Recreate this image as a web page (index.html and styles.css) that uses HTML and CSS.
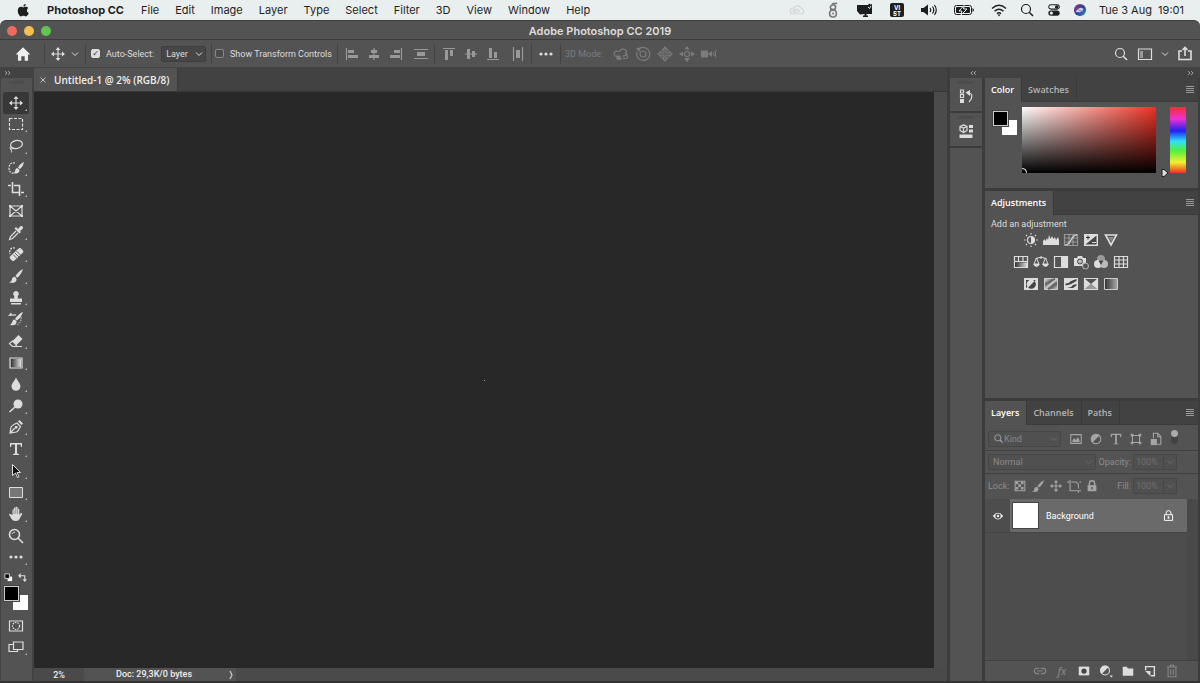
FILE: index.html
```html
<!DOCTYPE html>
<html lang="en">
<head>
<meta charset="utf-8">
<title>Adobe Photoshop CC 2019</title>
<meta name="viewport" content="width=device-width, initial-scale=1">
<link rel="stylesheet" href="styles.css">
</head>
<body>
<svg class="sprite" aria-hidden="true">
  <defs>
    <linearGradient id="fade"><stop offset="0" stop-color="#333"/><stop offset="1" stop-color="#ddd"/></linearGradient>
    <linearGradient id="fade-back"><stop offset="0" stop-color="#333"/><stop offset="1" stop-color="#aaa"/></linearGradient>
    <linearGradient id="diag" x2="1" y2="1"><stop offset="0" stop-color="#ddd"/><stop offset=".35" stop-color="#777"/><stop offset=".5" stop-color="#ccc"/><stop offset=".7" stop-color="#666"/><stop offset="1" stop-color="#ddd"/></linearGradient>
    <linearGradient id="siri" x2="1" y2="1"><stop offset="0" stop-color="#b03a8c"/><stop offset=".5" stop-color="#2c3c90"/><stop offset="1" stop-color="#28a0d0"/></linearGradient>
    <symbol id="move" viewBox="0 0 16 16"><path d="M8 2.500v11M2.500 8h11" class="line"/><path d="M8 1l2.500 3h-5zM8 15l2.500-3h-5zM1 8l3-2.500v5zM15 8l-3-2.500v5z" class="fill"/></symbol>
    <symbol id="chev" viewBox="0 0 8 8"><path d="M1 2.500l3 3 3-3" class="line thin"/></symbol>
    <symbol id="search" viewBox="0 0 16 16"><circle cx="7" cy="7" r="4.500" class="line"/><path d="M10.200 10.200L14 14" class="line heavy"/></symbol>
    <symbol id="brush" viewBox="0 0 16 16"><path d="M15 1c-3 1.500-5.500 4-7.500 7l1.800 1.700C12 7.500 14 4.500 15 1zM6.800 8.800c-2 0-2.800 1.500-3 3C3.500 13.500 2.500 14 1 14.300c3 1.200 7 .5 7.500-2 .2-1-.2-2-.7-2.500z" class="fill"/></symbol>
    <symbol id="menu" viewBox="0 0 10 8"><path d="M1 .5h8M1 2.500h8M1 4.500h8M1 6.500h8" class="line thin"/></symbol>
    <symbol id="dots" viewBox="0 0 16 16"><circle cx="3" cy="8" r="1.600" class="fill"/><circle cx="8" cy="8" r="1.600" class="fill"/><circle cx="13" cy="8" r="1.600" class="fill"/></symbol>
    <symbol id="half" viewBox="0 0 16 16"><circle cx="8" cy="8" r="5.500" class="line"/><path d="M12 4a5.600 5.600 0 0 0-8 8z" class="fill"/></symbol>
    <symbol id="left2" viewBox="0 0 8 6"><path d="M3.500 .8L1 3l2.500 2.200M7 .8L4.500 3 7 5.200" class="line thin"/></symbol>
    <symbol id="right2" viewBox="0 0 8 6"><path d="M1 .8L3.500 3 1 5.200M4.500 .8L7 3 4.500 5.200" class="line thin"/></symbol>
  </defs>
</svg>

<header class="menubar">
  <nav class="menus" aria-label="Application menu">
    <button class="apple" aria-label="Apple"><svg viewBox="0 0 16 16"><path class="fill" d="M11.200 1c.1 1.500-1.200 3-2.800 3C8.200 2.500 9.600 1.100 11.200 1zM8.300 5c.7 0 1.500-.8 2.900-.8 1.100 0 2.200.6 2.900 1.500-2.400 1.500-2 4.800.5 5.700-.6 1.700-1.900 3.900-3.400 3.900-1 0-1.500-.6-2.700-.6s-1.800.6-2.700.6C4 15.300 2 11.800 2 8.800c0-2.900 1.700-4.500 3.700-4.500 1.200 0 2 .7 2.600.7z"/></svg></button>
    <button class="app">Photoshop CC</button>
    <button>File</button><button>Edit</button><button>Image</button><button>Layer</button><button>Type</button><button>Select</button><button>Filter</button><button>3D</button><button>View</button><button>Window</button><button>Help</button>
  </nav>
  <div class="status-icons">
    <svg class="cloud" viewBox="0 0 16 16"><path class="line" d="M4 12a3 3 0 1 1 .5-6 4.500 4.500 0 0 1 8 .5A2.800 2.800 0 0 1 12 12H9L5.500 8.500M7 12a2.500 2.500 0 1 1 1.500-4.500L11 10"/></svg>
    <svg class="loops" viewBox="0 0 16 16"><path class="line heavy" d="M7 2c2-1.500 3 .5 5-1M8 3C4.500 3 4.500 7.500 8 7.500S11.500 3 8 3zM8 8c-4.500 0-4.500 7 0 7S12.500 8 8 8zM5 7.500l6 1M8 10.500v2"/></svg>
    <svg viewBox="0 0 16 16"><path class="fill" d="M0 3h11l1-1.500 1.500 1L15 2v10H9.500v1.500H11V15H6v-1.500h1.500V12L3 12.500 0 9z"/><path d="M11 5l1.500 1.500L14 4" stroke="#e9eeee" fill="none"/></svg>
    <svg viewBox="0 0 16 16"><rect class="fill" x="1" y="1" width="14" height="14" rx="2"/><text x="8" y="7.500">VI</text><text x="8" y="13.500">ST</text></svg>
    <svg viewBox="0 0 16 16"><path class="fill" d="M0 6h2.500L7 2.500v11L2.500 10H0z"/><path class="line" d="M9 6q1.500 2 0 4M11.500 4.500q2.500 3.500 0 7M13.500 3q3.500 5 0 10"/></svg>
    <svg class="battery" viewBox="0 0 22 16"><rect class="line thin" x="1.500" y="3.500" width="17" height="9" rx="2"/><rect class="fill" x="3" y="5" width="14" height="6" rx="1"/><path d="M11 3.500L6 9h3l-1 4 6-6h-3.500z" fill="#111" stroke="#e9eeee"/><path class="fill" d="M19.500 6q3 2 0 4z"/></svg>
    <svg viewBox="0 0 16 16"><path d="M1 6.500q7-6.500 14 0M3.500 9.200q4.500-4 9 0M6 11.600q2-1.600 4 0" fill="none" stroke="#222" stroke-width="1.500"/><path class="fill" d="M8 14.500l-1.500-2h3z"/></svg>
    <svg class="glass"><use href="#search"/></svg>
    <svg viewBox="0 0 16 16"><rect class="line" x="2" y="2" width="12" height="5" rx="2.500"/><circle class="fill" cx="11" cy="4.500" r="2"/><rect class="fill" x="1.500" y="8.500" width="13" height="6" rx="3"/><circle cx="5" cy="11.500" r="1.800" fill="#e9eeee"/></svg>
    <svg viewBox="0 0 16 16"><circle cx="8" cy="8" r="7" fill="url(#siri)"/><path d="M3 10q5-7 9-3-3 5-9 3z" fill="#b8d8ee"/><path d="M4 7l8 3" stroke="#d85b9d"/></svg>
    <time>Tue 3 Aug&nbsp; 19:01</time>
  </div>
</header>

<main class="window">
  <div class="titlebar">
    <div class="lights"><button class="close" aria-label="Close"></button><button class="min" aria-label="Minimise"></button><button class="zoom" aria-label="Zoom"></button></div>
    <h1>Adobe Photoshop CC 2019</h1>
  </div>

  <div class="options">
    <div class="group home"><button aria-label="Home"><svg class="i18" viewBox="0 0 16 16"><path class="fill" d="M8 2L1.500 8.500h2V14h3v-4h3v4h3V8.500h2z"/></svg></button></div>
    <div class="group current"><button aria-label="Move tool"><svg><use href="#move"/></svg></button><button aria-label="Tool presets"><svg class="i8"><use href="#chev"/></svg></button></div>
    <div class="group auto">
      <label class="check"><input type="checkbox" checked>Auto-Select:</label>
      <span class="select"><select aria-label="Auto-select target"><option>Layer</option><option>Group</option></select><svg class="i8"><use href="#chev"/></svg></span>
    </div>
    <div class="group transform"><label class="check"><input type="checkbox">Show Transform Controls</label></div>
    <div class="group align muted">
      <button aria-label="Align left"><svg viewBox="0 0 16 16"><path class="line" d="M2.500 2v12"/><path class="fill" d="M4 4h6v3H4zM4 9h10v3H4z"/></svg></button>
      <button aria-label="Align centres"><svg viewBox="0 0 16 16"><path class="line" d="M8 2v12"/><path class="fill" d="M5 4h6v3H5zM3 9h10v3H3z"/></svg></button>
      <button aria-label="Align right"><svg viewBox="0 0 16 16"><path class="line" d="M13.500 2v12"/><path class="fill" d="M6 4h6v3H6zM2 9h10v3H2z"/></svg></button>
      <button class="spread" aria-label="Distribute vertically"><svg viewBox="0 0 16 16"><path class="line" d="M1 3.500h14M1 12.500h14"/><path class="fill" d="M4 6h8v4H4z"/></svg></button>
    </div>
    <div class="group align muted">
      <button aria-label="Align top"><svg viewBox="0 0 16 16"><path class="line" d="M2 2.500h12"/><path class="fill" d="M4 4h3v10H4zM9 4h3v6H9z"/></svg></button>
      <button aria-label="Align middles"><svg viewBox="0 0 16 16"><path class="line" d="M2 8h12"/><path class="fill" d="M4 3h3v10H4zM9 5h3v6H9z"/></svg></button>
      <button aria-label="Align bottom"><svg viewBox="0 0 16 16"><path class="line" d="M2 13.500h12"/><path class="fill" d="M4 2h3v10H4zM9 6h3v6H9z"/></svg></button>
      <button class="spread" aria-label="Distribute horizontally"><svg viewBox="0 0 16 16"><path class="line" d="M3.500 1v14M12.500 1v14"/><path class="fill" d="M6 4h4v8H6z"/></svg></button>
    </div>
    <div class="group more"><button aria-label="More options"><svg><use href="#dots"/></svg></button></div>
    <div class="group mode dim">
      <span>3D Mode:</span>
      <button aria-label="Orbit"><svg viewBox="0 0 16 16"><path class="line" d="M6.500 6a3.500 3.500 0 1 1 3 4M5.500 5.500C3 4.500.8 6 1 8c.2 1.500 1.500 2.500 3 3M12 7.500c3 1 4 5 0 5h-2"/><path class="fill" d="M3 9.500h4l2 4-5 .5z"/></svg></button>
      <button aria-label="Roll"><svg viewBox="0 0 16 16"><circle class="line" cx="8" cy="8" r="3"/><path class="line" d="M4 3a6.500 6.500 0 1 1-2 3"/><path class="fill" d="M1 2l5-.5L4 6z"/></svg></button>
      <button aria-label="Pan"><svg viewBox="0 0 16 16"><path class="line" d="M8 1l2.500 3H9v3h3V5.500L15 8l-3 2.500V9H9v3h1.500L8 15l-2.500-3H7V9H4v1.500L1 8l3-2.500V7h3V4H5.500z"/></svg></button>
      <button aria-label="Slide"><svg viewBox="0 0 16 16"><circle class="line" cx="8" cy="8" r="2.500"/><path class="fill" d="M8 0l2.500 3.500h-5zM8 16l3-4H5zM0 8l4-2.500v5zM16 8l-4-2.500v5z"/></svg></button>
      <button aria-label="3D camera"><svg viewBox="0 0 16 16"><path class="fill" d="M0 4.500h7v7H0zM7 8l4-3v6z"/><path class="line thin" d="M15.500 4L12 8l3.500 4M14.500 6v4"/></svg></button>
    </div>
    <div class="group right">
      <button aria-label="Search"><svg><use href="#search"/></svg></button>
      <button aria-label="Workspace"><svg viewBox="0 0 16 16"><path class="line" d="M1.500 3h13v10.500h-13z"/><path d="M3 5h3v7H3z" fill="#999"/></svg></button>
      <button aria-label="Workspace menu"><svg class="i8"><use href="#chev"/></svg></button>
      <button aria-label="Share"><svg viewBox="0 0 16 16"><path class="line heavy" d="M5 5H2v8.500h12V5h-3M8 10V2M5.500 4L8 1.500 10.500 4"/></svg></button>
    </div>
  </div>

  <div class="workspace">
    <aside class="rail" aria-label="Tools">
      <div class="strip"><button aria-label="Expand toolbar"><svg class="i8"><use href="#right2"/></svg></button></div>
      <div class="grip"></div>
      <div class="tools">
        <button class="tool on" aria-label="Move"><svg><use href="#move"/></svg></button>
        <button class="tool" aria-label="Marquee"><svg viewBox="0 0 16 16"><path class="line" stroke-dasharray="3 1.500" d="M1.500 2.500h13v11h-13z"/></svg></button>
        <button class="tool" aria-label="Lasso"><svg viewBox="0 0 16 16"><ellipse class="line" cx="8.500" cy="6.500" rx="6" ry="4" transform="rotate(-12 8.500 6.500)"/><path class="line thin" d="M3 8.500c-2 1-.5 3 1 2.500s.5-2.500-1-1 1.500 2.500.5 4.500"/></svg></button>
        <button class="tool" aria-label="Quick selection"><svg viewBox="0 0 16 16"><path class="line" stroke-dasharray="2 1" d="M7 3C3 2 1 4.500 1 8s2 5.500 5 5"/><path class="fill" d="M16 2c-3 1-4.500 3-6 5.500l2 1.500c2-2 3.500-4 4-7zM9.500 8c-2 0-2.300 3-3.500 5.500 3 0 5.500-.5 5.500-3.500z"/></svg></button>
        <button class="tool" aria-label="Crop"><svg viewBox="0 0 16 16"><path class="line heavy" d="M4.500 1v10.500H12M0 4.500h3M6 4.500h5.500V15M13 11.500h3"/></svg></button>
        <button class="tool plain" aria-label="Frame"><svg viewBox="0 0 16 16"><path class="line" d="M2 3h12v10H2zM2 3l12 10M14 3L2 13"/><path class="fill" d="M1 2h2v2H1zM13 2h2v2h-2zM1 12h2v2H1zM13 12h2v2h-2z"/></svg></button>
        <button class="tool" aria-label="Eyedropper"><svg viewBox="0 0 16 16"><path class="fill" d="M10 4l2-2.500c2-1.500 4 .5 2.500 2.500L12 6l1 1-1.500 1.500-5-5L8 2z"/><path class="line" d="M8 6L2.500 11.500l-1 3 3-1L10 8"/></svg></button>
        <button class="tool" aria-label="Healing brush"><svg viewBox="0 0 16 16"><path class="line" stroke-dasharray="2 1" d="M7 2C3 1 1 4 2 8"/><rect class="fill" x="1" y="5.500" width="15" height="6" rx="2" transform="rotate(-42 8.500 8.500)"/><path d="M5 8.500l4 4M8.500 5l4 4M7 7l4 4" stroke="#666"/></svg></button>
        <button class="tool" aria-label="Brush"><svg><use href="#brush"/></svg></button>
        <button class="tool" aria-label="Clone stamp"><svg viewBox="0 0 16 16"><path class="fill" d="M8 1a2.800 2.800 0 0 1 2 4.800L9.500 8.500H14V12H2V8.500h4.500L6 5.800A2.800 2.800 0 0 1 8 1zM3 13h10v1.500H3z"/></svg></button>
        <button class="tool" aria-label="History brush"><svg viewBox="0 0 16 16"><path class="fill" d="M15 1c-3 1-6 4-8 7l2 1.500C12 7.500 14 4 15 1zM6.500 8.500C4 8.500 5 12 2 14c4 1 7 0 6.500-4zM0 5l3-3.500 1 3z"/><path class="line" d="M2 4h6"/><path class="line thin" stroke-dasharray="1.500 1" d="M13 6q1 5-4 8"/></svg></button>
        <button class="tool" aria-label="Eraser"><svg viewBox="0 0 16 16"><path class="fill" d="M10.500 2l4 4-6 6-4-4z"/><path class="line" d="M4.500 8l4 4-1.500 1.500H4.500l-3-3zM7 13.500h7"/></svg></button>
        <button class="tool" aria-label="Gradient"><svg viewBox="0 0 16 16"><path class="line" d="M2 3h12v10H2z"/><path fill="url(#fade)" d="M3 4h10v8H3z"/></svg></button>
        <button class="tool" aria-label="Blur"><svg viewBox="0 0 16 16"><path class="fill" d="M8 1.500c1 3 4.500 6 4.500 8.700a4.500 4.500 0 0 1-9 0C3.500 7.500 7 4.500 8 1.500z"/></svg></button>
        <button class="tool" aria-label="Dodge"><svg viewBox="0 0 16 16"><circle class="fill" cx="10" cy="6" r="4.500"/><path class="line heavy" d="M7 9l-5.500 5"/></svg></button>
        <button class="tool" aria-label="Pen"><svg viewBox="0 0 16 16"><path class="line" d="M2 14l1-6c2-2.500 4-3 6-4l3.500 3.500c-1 2-1.500 4-4 5.500zM2 14l5-5"/><path class="fill" d="M10 2.500L11.500 1 15 4.500 13.500 6zM7 7h2.500v2.500H7z"/></svg></button>
        <button class="tool" aria-label="Type"><svg viewBox="0 0 16 16"><path class="fill" d="M2 2h12v4h-1L12.500 3.500H9V12.500l2 .5v1H5v-1l2-.5v-9H3.500L3 6H2z"/></svg></button>
        <button class="tool" aria-label="Path selection"><svg viewBox="0 0 16 16"><path d="M4.500 1.500v11l3-2.500 2 4.500 1.500-.7-2-4.300h3.500z" fill="#111" stroke="#ddd"/></svg></button>
        <button class="tool" aria-label="Rectangle"><svg viewBox="0 0 16 16"><path d="M1.500 3.500h13v10h-13z" fill="#777" stroke="#ddd"/></svg></button>
        <button class="tool" aria-label="Hand"><svg viewBox="0 0 16 16"><path class="fill" d="M4.500 9V4q.8-1.500 1.500 0V2q.9-1.500 1.800 0v-.7q1-1.300 1.800 0V3q1-1 1.700 0v6l1-1.500q1.700-1 2 .3L12 12q-1 3-4 3c-3 0-4-1-5-3L1 8.500q.5-1.500 1.800-.3z"/><path d="M6 4v4M7.800 2v6M9.600 3v5" stroke="#535353" stroke-width=".5"/></svg></button>
        <button class="tool plain" aria-label="Zoom"><svg viewBox="0 0 16 16"><circle class="line heavy" cx="6.500" cy="6.500" r="5"/><path class="line heavy" d="M10 10l5 5"/><path class="line thin" d="M4 6q1-2 3-2"/></svg></button>
        <button class="tool" aria-label="Edit toolbar"><svg><use href="#dots"/></svg></button>
      </div>
      <div class="rail-foot">
        <div class="mini">
          <button aria-label="Default colours"><svg viewBox="0 0 10 10"><path d="M4 4h5v5H4z" fill="#fff"/><path d="M1 1h5v5H1z" fill="#000" stroke="#ddd"/></svg></button>
          <button aria-label="Swap colours"><svg viewBox="0 0 10 10"><path class="line" d="M2 3h5.500v5"/><path class="fill" d="M0 3l3-3v6zM7.500 10L5 7h5z"/></svg></button>
        </div>
        <div class="swatches"><span class="back"></span><span class="front"></span></div>
        <button class="tool plain" aria-label="Quick mask"><svg viewBox="0 0 16 16"><path class="line" d="M1.500 3h13v10h-13z"/><circle class="line" stroke-dasharray="1.500 1" cx="8" cy="8" r="3.500"/></svg></button>
        <button class="tool" aria-label="Screen mode"><svg viewBox="0 0 16 16"><path class="line" d="M5 5.500H1v7h8.500V11M5.500 3h9.500v7.500H5.500z"/></svg></button>
      </div>
    </aside>

    <section class="document">
      <div class="doc-tabs"><div class="doc-tab"><button aria-label="Close document"><svg viewBox="0 0 8 8"><path class="line thin" d="M1.500 1.500l5 5M6.500 1.500l-5 5"/></svg></button><span>Untitled-1 @ 2% (RGB/8)</span></div></div>
      <div class="stage"><div class="canvas"><span class="page"></span></div><div class="vscroll"></div></div>
      <footer class="statusbar"><span class="level">2%</span><span class="info">Doc: 29,3K/0 bytes</span><button aria-label="Status menu"><svg viewBox="0 0 8 10"><path class="line" d="M3 1l2 4-2 4"/></svg></button></footer>
    </section>

    <div class="side">
      <div class="strip side-strip"><button aria-label="Expand dock"><svg class="i8"><use href="#left2"/></svg></button><button aria-label="Collapse panels"><svg class="i8"><use href="#right2"/></svg></button></div>
      <div class="docks">
        <div class="dock">
          <div class="cell"><div class="grip"></div><button aria-label="History"><svg viewBox="0 0 16 16"><path class="line" d="M2.500 2h3v3h-3zM2.500 6.500h3v3h-3zM10 5c5 0 5 5 1 9"/><path class="fill" d="M2 11h4v4H2zM7.500 4.500L12 2v6z"/></svg></button></div>
          <div class="cell"><div class="grip"></div><button aria-label="Libraries"><svg viewBox="0 0 16 16"><path class="line" d="M2 3.500L5.500 2 9 3.500v4L5.500 9.500 2 7.500zM2 3.500L5.500 5 9 3.500M5.500 5v4.500"/><path class="fill" d="M11 2h4v3h-4zM11 6.500h4v3h-4zM1.500 11.500h13V15h-13z"/></svg></button></div>
          <div class="cell rest"></div>
        </div>
        <div class="panels">
          <section class="panel color">
            <div class="tabs"><button class="tab on">Color</button><button class="tab">Swatches</button><button class="burger" aria-label="Panel menu"><svg><use href="#menu"/></svg></button></div>
            <div class="picker">
              <div class="swatches"><span class="back"></span><span class="front"></span></div>
              <div class="field"><span class="knob"></span></div>
              <div class="hue"><svg class="pointer" viewBox="0 0 8 8"><path d="M1 .5h2L7 4 3 7.500H1z" fill="#ddd" stroke="#222"/></svg></div>
            </div>
          </section>
          <section class="panel adjust">
            <div class="tabs"><button class="tab on">Adjustments</button><button class="burger" aria-label="Panel menu"><svg><use href="#menu"/></svg></button></div>
            <p>Add an adjustment</p>
            <div class="icons">
              <button aria-label="Brightness"><svg viewBox="0 0 16 16"><circle class="line" cx="8" cy="8" r="3.500"/><path class="fill" d="M8 4.500a3.500 3.500 0 0 1 0 7z"/><path class="line" d="M8 1v1.500M8 13.500V15M1 8h1.500M13.500 8H15M3 3l1 1M12 12l1 1M13 3l-1 1M3 13l1-1"/></svg></button>
              <button aria-label="Levels"><svg viewBox="0 0 16 16"><path class="fill" d="M0 13V9l1.500-2 1 2L4 6l1 2 1-5 1.500 4L9 4l1.500 3L12 5l1 3 2-3 1 3v5z"/></svg></button>
              <button aria-label="Curves"><svg viewBox="0 0 16 16"><path class="line faint" d="M1.500 2.500h13v11h-13zM1.500 6h13M1.500 10h13M6 2.500v11M10 2.500v11"/><path class="line" d="M2 13c7 0 5-10 12-10"/></svg></button>
              <button aria-label="Exposure"><svg viewBox="0 0 16 16"><path class="fill" d="M1 2h14v12H1z"/><path d="M2.500 12.500L13.500 3.500v9z" fill="#444"/><path d="M3 5.500h4M5 3.500v4" stroke="#333"/><path d="M9 10.500h4" stroke="#ddd"/></svg></button>
              <button aria-label="Vibrance"><svg viewBox="0 0 16 16"><path class="line heavy" d="M2.500 3h11L8 13z"/><path d="M5 5h6l-3 5z" fill="#888"/></svg></button>
            </div>
            <div class="icons">
              <button aria-label="Hue"><svg viewBox="0 0 16 16"><path class="line" d="M1.500 2.500h13v11h-13zM1.500 7.500h13M5.500 2.500v5M10 2.500v5"/><path fill="url(#fade)" d="M2 8.500h12V13H2z"/></svg></button>
              <button aria-label="Color balance"><svg viewBox="0 0 16 16"><path class="line thin" d="M2.500 4.500Q8 2 13.500 4.500M8 2v3M3.500 4L1 10h5zM12.500 4L10 10h5z"/><path class="fill" d="M0 10h7q-3.500 6-7 0zM9 10h7q-3.500 6-7 0z"/></svg></button>
              <button aria-label="Black and white"><svg viewBox="0 0 16 16"><path class="line" d="M1.500 2.500h13v11h-13z"/><path class="fill" d="M8 2h7v12H8z"/></svg></button>
              <button aria-label="Photo filter"><svg viewBox="0 0 16 16"><path class="fill" d="M1 4h3l1-2h4l1 2h3v8H1z"/><circle cx="7" cy="7.500" r="2.500" fill="#bbb" stroke="#444"/><circle cx="12.500" cy="12" r="3" fill="#555" stroke="#bbb"/></svg></button>
              <button aria-label="Channel mixer"><svg viewBox="0 0 16 16"><circle cx="8" cy="5" r="4" fill="#999"/><circle cx="5" cy="10" r="4" fill="#ddd"/><circle cx="11" cy="10" r="4" fill="#bbb"/><path d="M5.500 6.500h5L8 11z" fill="#444"/></svg></button>
              <button aria-label="Color lookup"><svg viewBox="0 0 16 16"><path class="line" d="M1.500 2.500h13v11h-13zM1.500 6h13M1.500 10h13M6 2.500v11M10.500 2.500v11"/></svg></button>
            </div>
            <div class="icons">
              <button aria-label="Invert"><svg viewBox="0 0 16 16"><path class="fill" d="M1 2h14v12H1z"/><path d="M3 4h10L3 12z" fill="#444"/><path d="M11.500 5a4.500 4.500 0 0 1-6.500 6.500z" fill="#444"/><path d="M5 11.500A4.500 4.500 0 0 1 11.500 5z" fill="#ddd"/></svg></button>
              <button aria-label="Posterize"><svg viewBox="0 0 16 16"><path d="M1.500 2.500h13v11h-13z" fill="url(#diag)" stroke="#ccc"/><path d="M2 8c5 0 6-5 10-5M5 13c4-1 5-5 9-6" stroke="#666" stroke-width="2" fill="none"/></svg></button>
              <button aria-label="Threshold"><svg viewBox="0 0 16 16"><path class="fill" d="M1 2h14v12H1z"/><path d="M2.500 7.500l3-.5L8 5l5.500-2v2L10 7l-3 1.500-4.500 1zM4 12l4-1 2-2 3.500-1v1.500L10 12z" fill="#444"/></svg></button>
              <button aria-label="Selective color"><svg viewBox="0 0 16 16"><path class="line" d="M1.500 2.500h13v11h-13z"/><path class="fill" d="M2 3l6 5-6 5zM14 3L8 8l6 5z"/><path d="M2 13l6-5 6 5z" fill="#999"/></svg></button>
              <button aria-label="Gradient map"><svg viewBox="0 0 16 16"><path fill="url(#fade-back)" stroke="#ccc" d="M1.500 2.500h13v11h-13z"/></svg></button>
            </div>
          </section>
          <section class="panel layers">
            <div class="tabs"><button class="tab on">Layers</button><button class="tab">Channels</button><button class="tab">Paths</button><button class="burger" aria-label="Panel menu"><svg><use href="#menu"/></svg></button></div>
            <div class="row filter-row">
              <span class="select kind"><svg class="lens"><use href="#search"/></svg><select aria-label="Filter type" disabled><option>Kind</option></select><svg class="i8"><use href="#chev"/></svg></span>
              <div class="filters">
                <button aria-label="Pixel layers"><svg viewBox="0 0 16 16"><path class="line" d="M2 3h12v10H2z"/><path class="fill" d="M4 11.500V9l2-2 2 2 2-3 2 3v2.500z"/></svg></button>
                <button aria-label="Adjustment layers"><svg><use href="#half"/></svg></button>
                <button aria-label="Type layers"><svg viewBox="0 0 16 16"><path class="fill" d="M2 2h12v4h-1L12.500 3.500H9V13l2 .5v.5H5v-.5l2-.5V3.500H3.500L3 6H2z"/></svg></button>
                <button aria-label="Shape layers"><svg viewBox="0 0 16 16"><path class="line" d="M4 4h8v8H4z"/><path class="fill" d="M2 2h3v3H2zM11 2h3v3h-3zM2 11h3v3H2zM11 11h3v3h-3z"/></svg></button>
                <button aria-label="Smart objects"><svg viewBox="0 0 16 16"><path class="line" d="M5 7V1.500h5L13.500 5v9H9M10 2v3.500h3"/><path class="fill" d="M2 8h7v7H2z"/></svg></button>
                <button class="toggle" aria-label="Toggle filtering"></button>
              </div>
            </div>
            <div class="row">
              <span class="select blend"><select aria-label="Blend mode" disabled><option>Normal</option></select><svg class="i8"><use href="#chev"/></svg></span>
              <label class="amount">Opacity:<input value="100%" disabled></label><button class="drop" aria-label="Opacity slider"><svg class="i8"><use href="#chev"/></svg></button>
            </div>
            <div class="row locks">
              <span class="lock-label">Lock:</span>
              <button aria-label="Lock transparency"><svg viewBox="0 0 16 16"><path class="line" d="M2.500 2.500h11v11h-11z"/><path class="fill" d="M3 3h3v3H3zM9 3h3v3H9zM6 6h3v3H6zM3 9h3v3H3zM9 9h3v3H9z"/></svg></button>
              <button aria-label="Lock pixels"><svg><use href="#brush"/></svg></button>
              <button aria-label="Lock position"><svg><use href="#move"/></svg></button>
              <button aria-label="Lock artboard"><svg viewBox="0 0 16 16"><path class="line" d="M3.500 1v12.500H16M0 3.500h3M5 3.500h5.500L13 6v5M13 14v2M14 3.500h2"/></svg></button>
              <button aria-label="Lock all"><svg viewBox="0 0 16 16"><path class="fill" d="M3 7h10v7H3z"/><path class="line heavy" d="M5 7V5a3 3 0 0 1 6 0v2"/><path d="M8 9v3" stroke="#535353" stroke-width="1.500"/></svg></button>
              <label class="amount">Fill:<input value="100%" disabled></label><button class="drop" aria-label="Fill slider"><svg class="i8"><use href="#chev"/></svg></button>
            </div>
            <div class="list">
              <div class="layer">
                <button class="eye" aria-label="Toggle visibility"><svg viewBox="0 0 16 16"><path class="fill" d="M1 8q7-9 14 0-7 9-14 0z"/><circle cx="8" cy="8" r="3.500" fill="#4f4f4f"/><circle class="fill" cx="8" cy="8" r="1.600"/></svg></button>
                <div class="entry"><span class="thumb"></span><span class="name">Background</span><svg viewBox="0 0 16 16"><path class="line" d="M3 7h10v7H3zM5 7V5a3 3 0 0 1 6 0v2"/><path class="fill" d="M7 9h2v3H7z"/></svg></div>
              </div>
            </div>
            <div class="actions">
              <button class="off" aria-label="Link"><svg viewBox="0 0 16 16"><path class="line" d="M7 5H4.500a3 3 0 0 0 0 6H7M9 5h2.500a3 3 0 0 1 0 6H9M5 8h6"/></svg></button>
              <button class="off fx" aria-label="Layer style">fx</button>
              <button aria-label="Add mask"><svg viewBox="0 0 16 16"><path class="fill" d="M2 3h12v10H2z"/><circle cx="8" cy="8" r="3" fill="#444"/></svg></button>
              <button aria-label="New adjustment"><svg viewBox="0 0 16 16"><circle class="line" cx="7" cy="7.500" r="5"/><path class="fill" d="M11 3.500a5.500 5.500 0 0 0-8 8zM12 13h4l-2 2.500z"/></svg></button>
              <button aria-label="New group"><svg viewBox="0 0 16 16"><path class="fill" d="M2 3h4.500L8 5h6v8.500H2z"/></svg></button>
              <button aria-label="New layer"><svg viewBox="0 0 16 16"><path class="line heavy" d="M3 7V3h10v10.500H9"/><path class="fill" d="M2.500 8H8.500v6z"/></svg></button>
              <button class="off" aria-label="Delete"><svg viewBox="0 0 16 16"><path class="line" d="M2 3.500h12M6 3V1.500h4V3M3.500 4v10.500h9V4M6.500 6v6.500M9.500 6v6.500"/></svg></button>
            </div>
          </section>
        </div>
      </div>
    </div>
  </div>
</main>
</body>
</html>
```
FILE: styles.css
```css
* { box-sizing: border-box; }
body {
  margin: 0;
  min-height: 100vh;
  display: flex;
  flex-direction: column;
  background: #e9eeee;
  color: #ddd;
  font: 9px/12px Roboto, "Liberation Sans", sans-serif;
}
button { border: 0; padding: 0; margin: 0; background: none; color: inherit; font: inherit; display: flex; align-items: center; justify-content: center; }
svg { display: block; width: 16px; height: 16px; flex: none; color: inherit; }
.sprite { position: absolute; width: 0; height: 0; }
.line { fill: none; stroke: currentColor; stroke-width: 1.2; }
.thin { stroke-width: 1; }
.heavy { stroke-width: 1.6; }
.faint { opacity: .5; }
.fill { fill: currentColor; }
svg.i8 { width: 8px; height: 8px; }
svg.i18 { width: 18px; height: 18px; }

/* System menu bar */
.menubar { height: 20px; display: flex; align-items: center; justify-content: space-between; color: #1d1f1f; font: 11px/14px Inter, sans-serif; padding: 0 16px; }
.menus { display: flex; gap: 16px; }
.menus .app { font-weight: 700; margin: 0 1px; }
.menus .apple svg { width: 14px; height: 14px; }
.status-icons { display: flex; align-items: center; gap: 16px; }
.status-icons .cloud { color: #d2d6d6; margin-right: 4px; }
.status-icons .loops { color: #777; }
.status-icons .battery { width: 22px; }
.status-icons .glass { margin: 0 -4px; }
.status-icons svg:nth-of-type(n+9) { width: 14px; height: 14px; margin-right: -4px; }
.status-icons text { font: 700 6px Inter, sans-serif; fill: #fff; text-anchor: middle; }

/* Window frame */
.window { flex: 1; display: flex; flex-direction: column; background: #535353; border-radius: 6px 6px 0 0; border-top: 1px solid #3e3e3e; border-bottom: 2px solid #333; overflow: hidden; }
.titlebar { height: 19px; display: grid; grid-template-columns: 1fr auto 1fr; align-items: center; border-bottom: 1px solid #3c3c3c; }
.titlebar h1 { margin: 0; font: 600 11px/18px Inter, sans-serif; padding-top: 1px; }
.lights { display: flex; gap: 7px; padding-left: 7px; }
.lights button { width: 10px; height: 10px; border-radius: 50%; }
.close { background: #ec6a5e; }
.min { background: #f4bf50; }
.zoom { background: #61c454; }

/* Options bar */
.options { height: 28px; display: flex; align-items: center; border-bottom: 1px solid #444; padding-left: 2px; }
.group { height: 20px; display: flex; align-items: center; border-right: 1px solid #424242; }
.home { width: 43px; justify-content: center; color: #eee; }
.current { width: 41px; padding-left: 5px; gap: 5px; }
.auto { width: 126px; padding-left: 5px; gap: 7px; }
.transform { width: 126px; padding-left: 3px; }
.check { display: flex; align-items: center; gap: 6px; white-space: nowrap; }
.check input { appearance: none; margin: 0; width: 9px; height: 9px; border: 1px solid #888; border-radius: 2px; background: #4a4a4a; }
.check input:checked { background: #ddd; border-color: #ddd; color: #333; display: grid; place-items: center; }
.check input:checked::before { content: "✓"; font: 700 8px/8px "DejaVu Sans", sans-serif; }
.select { display: flex; align-items: center; position: relative; }
.select select { appearance: none; width: 100%; height: 16px; margin: 0; padding: 0 4px; border: 1px solid #3d3d3d; border-radius: 2px; background: #464646; color: #ddd; font: inherit; }
.select > svg.i8 { position: absolute; right: 3px; pointer-events: none; }
.auto .select { width: 45px; }
.align { width: 97px; padding-left: 6px; gap: 6px; }
.align .spread { margin-left: 3px; }
.muted { color: #999; }
.dim { color: #7c7c7c; }
.more { width: 29px; justify-content: center; }
.mode { border: 0; padding-left: 4px; gap: 6px; }
.mode span { width: 42px; white-space: nowrap; }
.right { border: 0; margin-left: auto; padding-right: 7px; gap: 8px; }

/* Workspace */
.workspace { flex: 1; display: flex; background: #3c3c3c; min-width: 0; }
.strip { height: 10px; background: #424242; display: flex; align-items: center; color: #aaa; padding-left: 3px; }
.strip svg.i8 { width: 7px; height: 6px; }
.grip { width: 16px; height: 3px; margin: 3px auto 4px; background: repeating-linear-gradient(90deg, #484848 0 1px, #505050 1px 2px); }
.rail { width: 34px; background: #535353; border-left: 1px solid #444; border-right: 2px solid #424242; display: flex; flex-direction: column; }
.tools { flex: 1; display: flex; flex-direction: column; padding-top: 4px; }
.tool { position: relative; flex: 1; width: 26px; margin-left: 2px; border-radius: 2px; color: #ddd; }
.tool.on { background: #383838; }
.tool::after { content: ""; position: absolute; right: 2px; bottom: 3px; border: 1px solid; border-color: transparent #bbb #bbb transparent; }
.tool.plain::after { display: none; }
.rail-foot { height: 113px; display: flex; flex-direction: column; padding-bottom: 23px; }
.mini { display: flex; gap: 5px; padding: 5px 0 4px 3px; }
.mini svg { width: 9px; height: 9px; }
.swatches { position: relative; width: 24px; height: 24px; margin-left: 3px; flex: none; }
.swatches span { position: absolute; width: 15px; height: 15px; }
.swatches .front { left: 0; top: 0; background: #000; border: 1px solid #ccc; outline: 1px solid #444; }
.swatches .back { right: 0; bottom: 0; background: #fff; }
.rail-foot .swatches { margin-bottom: 5px; }

/* Document */
.document { flex: 1; min-width: 0; display: flex; flex-direction: column; margin-right: 3px; }
.doc-tabs { height: 24px; background: #424242; display: flex; border-bottom: 1px solid #363636; }
.doc-tab { display: flex; align-items: center; gap: 7px; padding: 1px 7px 0 5px; background: #535353; color: #eee; font: 600 10px/14px "Open Sans", "Noto Sans", sans-serif; white-space: nowrap; border-right: 1px solid #3a3a3a; }
.doc-tab svg { width: 8px; height: 8px; color: #bbb; }
.stage { flex: 1; display: flex; }
.canvas { flex: 1; background: #282828; display: grid; place-items: center; }
.page { width: 1px; height: 1px; background: #999; }
.vscroll { width: 13px; background: #4b4b4b; }
.statusbar { height: 13px; background: #4a4a4a; display: flex; align-items: center; color: #eee; font-weight: 500; }
.level { width: 50px; text-align: center; }
.info { width: 142px; padding-left: 32px; background: #535353; line-height: 13px; }
.statusbar button { width: 10px; height: 13px; background: #535353; color: #ccc; }
.statusbar svg { width: 8px; height: 10px; }

/* Docked panels */
.side { width: 250px; display: flex; flex-direction: column; }
.side-strip { justify-content: space-between; padding: 0 6px 0 20px; }
.docks { flex: 1; display: flex; gap: 3px; padding-right: 2px; }
.dock { width: 32px; display: flex; flex-direction: column; gap: 2px; }
.cell { height: 33px; background: #535353; color: #ddd; }
.cell button { margin: 0 auto; }
.cell.rest { flex: 1; }
.panels { flex: 1; display: flex; flex-direction: column; gap: 3px; }
.panel { background: #535353; display: flex; flex-direction: column; }
.color { height: 110px; }
.adjust { height: 207px; }
.layers { flex: 1; }
.tabs { height: 24px; flex: none; background: #424242; display: flex; border-bottom: 1px solid #3b3b3b; font: 600 9px/12px "Open Sans", "Noto Sans", sans-serif; color: #b5b5b5; }
.tab { padding: 0 7px 0 6px; border-right: 1px solid #393939; }
.tab.on { background: #535353; color: #fff; margin-bottom: -1px; }
.burger { margin-left: auto; padding-right: 3px; color: #999; }
.burger svg { width: 10px; height: 8px; }
.picker { display: flex; padding: 5px 12px 0 4px; height: 71px; }
.picker .swatches { margin: 4px 5px 0 4px; }
.field { position: relative; overflow: hidden; flex: 1; background: linear-gradient(transparent, #000), linear-gradient(90deg, #fff, #ed3124); }
.knob { position: absolute; left: -4px; bottom: -4px; width: 9px; height: 9px; border: 1px solid #fff; border-radius: 50%; }
.hue { position: relative; width: 16px; margin-left: 14px; background: linear-gradient(#f03030, #f030d0 18%, #2020f0 36%, #30e0f8 52%, #50f040 66%, #f0f030 84%, #f03020); }
.pointer { position: absolute; left: -9px; bottom: -4px; width: 8px; height: 8px; }
.adjust p { margin: 3px 6px 2px; line-height: 12px; }
.icons { display: flex; justify-content: center; gap: 4px; height: 16px; margin: 0 42px 6px 0; }
.row { display: flex; align-items: center; height: 23px; padding-left: 3px; border-bottom: 1px solid #414141; color: #8b8b8b; }
.row .select select, .amount input, .drop { border: 1px solid #464646; background: #505050; color: #888; opacity: 1; }
.row .select svg, .drop { color: #6c6c6c; }
.filter-row { height: 26px; padding-top: 2px; }
.kind { width: 73px; }
.row .kind select { padding-left: 15px; }
.row .kind .lens { position: absolute; left: 5px; width: 11px; height: 11px; color: #aaa; }
.filters { display: flex; gap: 6px; align-items: center; padding-left: 8px; color: #a5a5a5; }
.filters svg, .locks > button:not(.drop) svg { width: 14px; height: 14px; }
.toggle { width: 7px; height: 14px; border-radius: 4px; background: #424242; align-items: flex-start; margin: -4px 0 0 2px; }
.toggle::before { content: ""; width: 7px; height: 7px; border-radius: 50%; background: #aaa; }
.blend { width: 108px; }
.amount { display: flex; align-items: center; justify-content: flex-end; gap: 2px; flex: 1; }
.amount input { width: 31px; height: 16px; padding: 0 0 0 2px; margin: 0; font: inherit; border-radius: 2px 0 0 2px; color: #707070; }
.drop { width: 13px; height: 16px; margin-right: 21px; border-left: 0; }
.locks { border-bottom: 0; gap: 4px; color: #a5a5a5; height: 25px; padding-bottom: 2px; }
.locks .drop { margin-left: -4px; }
.lock-label, .locks .amount { color: #8b8b8b; }
.list { flex: 1; background: #4d4d4d; border-right: 11px solid #494949; }
.layer { display: flex; height: 34px; border-bottom: 1px solid #444; }
.eye { width: 25px; color: #eee; }
.eye svg { width: 12px; height: 12px; }
.entry { flex: 1; display: flex; align-items: center; background: #6a6a6a; padding: 0 12px 0 2px; color: #fff; }
.entry svg { width: 13px; height: 13px; }
.thumb { width: 27px; height: 27px; background: #fff; border: 1px solid #444; }
.name { flex: 1; padding-left: 7px; }
.actions { height: 21px; display: flex; align-items: center; justify-content: flex-end; gap: 8px; padding-right: 19px; border-top: 1px solid #414141; color: #ddd; }
.actions button { width: 14px; }
.actions svg { width: 14px; height: 14px; }
.actions .off { color: #888; }
.fx { font: italic 11px/12px "Noto Sans", sans-serif; }
```
